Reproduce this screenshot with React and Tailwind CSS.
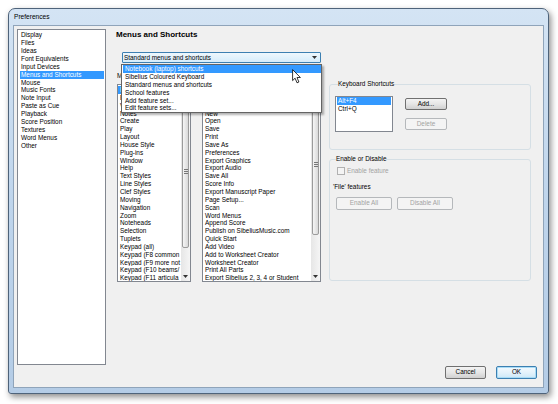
const leftItems = [
  'Display',
  'Files',
  'Ideas',
  'Font Equivalents',
  'Input Devices',
  'Menus and Shortcuts',
  'Mouse',
  'Music Fonts',
  'Note Input',
  'Paste as Cue',
  'Playback',
  'Score Position',
  'Textures',
  'Word Menus',
  'Other',
];

const menus = [
  'File',
  'Edit',
  'View',
  'Notes',
  'Create',
  'Play',
  'Layout',
  'House Style',
  'Plug-ins',
  'Window',
  'Help',
  'Text Styles',
  'Line Styles',
  'Clef Styles',
  'Moving',
  'Navigation',
  'Zoom',
  'Noteheads',
  'Selection',
  'Tuplets',
  'Keypad (all)',
  'Keypad (F8 common',
  'Keypad (F9 more not',
  'Keypad (F10 beams/',
  'Keypad (F11 articula',
];

const features = [
  'Close',
  'Import',
  'Recent Files',
  'New',
  'Open',
  'Save',
  'Print',
  'Save As',
  'Preferences',
  'Export Graphics',
  'Export Audio',
  'Save All',
  'Score Info',
  'Export Manuscript Paper',
  'Page Setup...',
  'Scan',
  'Word Menus',
  'Append Score',
  'Publish on SibeliusMusic.com',
  'Quick Start',
  'Add Video',
  'Add to Worksheet Creator',
  'Worksheet Creator',
  'Print All Parts',
  'Export Sibelius 2, 3, 4 or Student',
];

const setOptions = [
  'Notebook (laptop) shortcuts',
  'Sibelius Coloured Keyboard',
  'Standard menus and shortcuts',
  'School features',
  'Add feature set...',
  'Edit feature sets...',
];

function Tri({ up }) {
  return (
    <svg width="5" height="3" viewBox="0 0 5 3">
      <path d={up ? 'M0 3 L2.5 0 L5 3 Z' : 'M0 0 L5 0 L2.5 3 Z'} fill="#333" />
    </svg>
  );
}

function ScrollBar({ thumbClass }) {
  return (
    <div className="flex w-[9px] flex-col bg-gradient-to-r from-[#e6e6e6] to-[#f5f5f5]">
      <div className="flex h-[9px] items-center justify-center">
        <Tri up />
      </div>
      <div
        className={`mx-px flex items-center justify-center rounded-[2px] border border-[#9b9b9b] bg-gradient-to-r from-[#f6f6f6] to-[#d9d9d9] ${thumbClass}`}
      >
        <div className="flex flex-col gap-px">
          <div className="h-px w-[4px] bg-[#777]" />
          <div className="h-px w-[4px] bg-[#777]" />
          <div className="h-px w-[4px] bg-[#777]" />
        </div>
      </div>
      <div className="flex-1" />
      <div className="flex h-[9px] items-center justify-center">
        <Tri />
      </div>
    </div>
  );
}

function ListBox({ items, selected, className, thumbClass }) {
  return (
    <div className={`flex border border-[#828790] bg-white ${className}`}>
      <div className="min-w-0 flex-1 overflow-hidden pt-px">
        {items.map((item, i) => (
          <div
            key={i}
            className={`h-[7.85px] overflow-hidden whitespace-nowrap pl-[2px] leading-[7.85px] ${
              i === selected ? 'bg-[#3399ff] text-white' : ''
            }`}
          >
            {item}
          </div>
        ))}
      </div>
      <ScrollBar thumbClass={thumbClass} />
    </div>
  );
}

function Button({ children, disabled, primary, className }) {
  let look = 'border-[#707070] bg-gradient-to-b from-[#f3f3f3] via-[#e6e6e6] to-[#d0d0d0] text-black';
  if (disabled) look = 'border-[#b5b8bb] bg-[#f4f4f4] text-[#a3a3a3]';
  if (primary)
    look = 'border-[#3c7fb1] bg-gradient-to-b from-[#f4fafe] via-[#e4f2fb] to-[#cde8f8] text-black shadow-[inset_0_0_0_1px_#a9dcf6]';
  return (
    <div className={`flex items-center justify-center rounded-[2px] border leading-none ${look} ${className}`}>
      {children}
    </div>
  );
}

function Cursor() {
  return (
    <svg width="10" height="15" viewBox="0 0 10 15">
      <path
        d="M0.6 0.6 L0.6 11.6 L3.1 9.2 L5 13.8 L6.9 13 L5 8.5 L8.4 8.5 Z"
        fill="#fff"
        stroke="#000"
        strokeWidth="0.8"
        strokeLinejoin="round"
      />
    </svg>
  );
}

export default function App() {
  return (
    <div className="h-[404px] w-[558px] bg-white p-[8px] font-['Liberation_Sans',Arial,sans-serif] text-[6.4px] text-black">
      <div className="flex h-[386px] w-[541px] flex-col rounded-t-[7px] rounded-b-[3px] border border-[#4e637a] bg-gradient-to-b from-[#d4e4f4] via-[#bfd5ec] to-[#b4cce6] shadow-[2px_3px_6px_rgba(0,0,0,0.45)]">
        <div className="flex h-[16px] items-center pl-[5px] text-[6.6px]">Preferences</div>

        <div className="mx-[4px] flex h-[363px] flex-col border border-[#8fa4ba] bg-[#f0f0f0] pl-[3px] pt-[3px]">
          <div className="flex h-[336px]">
            {/* category list */}
            <div className="h-full w-[89px] border border-[#828790] bg-white pl-[2px] pr-px pt-px">
              {leftItems.map((item) => (
                <div
                  key={item}
                  className={`h-[7.93px] whitespace-nowrap pl-px leading-[7.93px] ${
                    item === 'Menus and Shortcuts' ? 'bg-[#3399ff] text-white' : ''
                  }`}
                >
                  {item}
                </div>
              ))}
            </div>

            {/* page */}
            <div className="flex flex-col pl-[10px]">
              <div className="pt-[2px] text-[8px] font-bold leading-[8px]">Menus and Shortcuts</div>

              <div className="relative ml-[6px] mt-[13px] flex h-[11px] w-[199px] items-center justify-between rounded-[1px] border border-[#3c7fb1] bg-gradient-to-b from-[#eef7fd] to-[#d5ecfa] pl-[1px] pr-[3px]">
                <span>Standard menus and shortcuts</span>
                <Tri />
                <div className="absolute left-[-2px] top-[11px] z-10 w-[201px] border border-[#646464] bg-white pl-px shadow-[2px_2px_2px_rgba(0,0,0,0.3)]">
                  {setOptions.map((opt, i) => (
                    <div
                      key={opt}
                      className={`h-[7.9px] whitespace-nowrap pl-[2px] leading-[7.9px] ${
                        i === 0 ? 'bg-[#3399ff] text-white' : ''
                      }`}
                    >
                      {opt}
                    </div>
                  ))}
                </div>
                <div className="absolute left-[169px] top-[16px] z-20">
                  <Cursor />
                </div>
              </div>

              <div className="flex items-start">
                <div className="ml-px flex flex-col">
                  <div className="mt-[9px] flex leading-[8px]">
                    <span className="w-[85px]">Menus:</span>
                    <span>Menu items:</span>
                  </div>
                  <div className="mt-[4px] flex gap-[11px]">
                    <ListBox items={menus} selected={0} className="h-[198px] w-[74px]" thumbClass="h-[154px]" />
                    <ListBox items={features} selected={-1} className="h-[198px] w-[119px]" thumbClass="h-[141px]" />
                  </div>
                </div>

                <div className="ml-[8px] mt-[17px] flex w-[202px] flex-col">
                  <fieldset className="rounded-[3px] border border-[#d5dfe5] pb-[17px] pl-[5px]">
                    <legend className="ml-[3px] leading-[8px]">Keyboard Shortcuts</legend>
                    <div className="mt-[8px] flex">
                      <div className="h-[36px] w-[58px] border border-[#828790] bg-white px-px">
                        <div className="h-[7.6px] pl-px leading-[7.6px] bg-[#3399ff] text-white">Alt+F4</div>
                        <div className="h-[7.6px] pl-px leading-[7.6px]">Ctrl+Q</div>
                      </div>
                      <div className="ml-[12px] mt-[2px] flex flex-col gap-[8px]">
                        <Button className="h-[12px] w-[42px]">Add...</Button>
                        <Button disabled className="h-[12px] w-[42px]">
                          Delete
                        </Button>
                      </div>
                    </div>
                  </fieldset>

                  <fieldset className="mt-[5px] rounded-[3px] border border-[#d5dfe5] pb-[70px] pl-[3px]">
                    <legend className="ml-[3px] leading-[8px]">Enable or Disable</legend>
                    <div className="ml-[4px] mt-[4px] flex h-[8px] items-center gap-[2px] text-[#a3a3a3]">
                      <div className="h-[8px] w-[8px] border border-[#b1b1b1] bg-[#f4f4f4]" />
                      <span>Enable feature</span>
                    </div>
                    <div className="mt-[8px] leading-[8px]">'File' features</div>
                    <div className="ml-[3px] mt-[6px] flex gap-[5px]">
                      <Button disabled className="h-[13px] w-[56px]">
                        Enable All
                      </Button>
                      <Button disabled className="h-[13px] w-[56px]">
                        Disable All
                      </Button>
                    </div>
                  </fieldset>
                </div>
              </div>
            </div>
          </div>

          <div className="mt-px flex justify-end gap-[10px] pr-[6px]">
            <Button className="h-[13px] w-[41px]">Cancel</Button>
            <Button primary className="h-[13px] w-[41px]">
              OK
            </Button>
          </div>
        </div>
      </div>
    </div>
  );
}
